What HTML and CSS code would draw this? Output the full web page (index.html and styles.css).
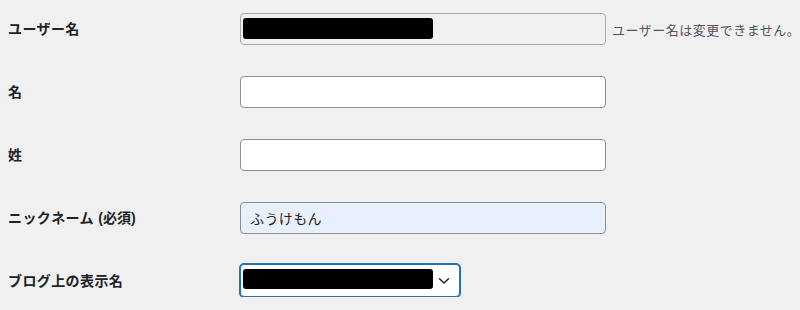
FILE: index.html
```html
<!DOCTYPE html>
<html lang="ja">
<head>
    <meta charset="UTF-8">
    <meta name="viewport" content="width=device-width, initial-scale=1.0">
    <title>プロフィール</title>
    <link rel="stylesheet" href="styles.css">
</head>
<body>
    <div class="form-table">
        <div class="row">
            <label class="row-label" for="user_login">ユーザー名</label>
            <div class="field">
                <div class="masked">
                    <input type="text" id="user_login" class="regular-text" value="" disabled>
                    <span class="blackout"></span>
                </div>
                <span class="description">ユーザー名は変更できません。</span>
            </div>
        </div>

        <div class="row">
            <label class="row-label" for="first_name">名</label>
            <div class="field">
                <input type="text" id="first_name" class="regular-text" value="">
            </div>
        </div>

        <div class="row">
            <label class="row-label" for="last_name">姓</label>
            <div class="field">
                <input type="text" id="last_name" class="regular-text" value="">
            </div>
        </div>

        <div class="row">
            <label class="row-label" for="nickname">ニックネーム <span class="req">(必須)</span></label>
            <div class="field">
                <input type="text" id="nickname" class="regular-text autofilled" value="ふうけもん">
            </div>
        </div>

        <div class="row">
            <label class="row-label" for="display_name">ブログ上の表示名</label>
            <div class="field">
                <div class="masked select-wrap">
                    <select id="display_name" class="display-select">
                        <option></option>
                    </select>
                    <span class="blackout"></span>
                    <svg class="chevron" width="12" height="8" viewBox="0 0 12 8">
                        <path d="M1.5 1.8 L6 6 L10.5 1.8" fill="none" stroke="#1d2327" stroke-width="1.5" stroke-linecap="round" stroke-linejoin="round"/>
                    </svg>
                </div>
            </div>
        </div>
    </div>
</body>
</html>
```

FILE: styles.css
```css
* {
    margin: 0;
    padding: 0;
    box-sizing: border-box;
}

body {
    background: #f0f0f1;
    color: #1d2327;
    font-family: "Liberation Sans", "Noto Sans CJK JP", sans-serif;
    font-size: 14px;
    padding: 13px 0 0 8px;
}

.form-table {
    display: flex;
    flex-direction: column;
    gap: 31px;
}

.row {
    display: flex;
    align-items: center;
    height: 32px;
}

.row-label {
    width: 232px;
    flex-shrink: 0;
    font-weight: 700;
    font-size: 14px;
    line-height: 20px;
    letter-spacing: 0.4px;
}

.req {
    letter-spacing: 0;
}

.field {
    display: flex;
    align-items: center;
    gap: 6px;
    height: 100%;
}

.regular-text {
    width: 366px;
    height: 32px;
    padding: 0 9px;
    font-family: "Noto Sans CJK JP", sans-serif;
    font-size: 14px;
    letter-spacing: 0.4px;
    color: #1d2327;
    background: #fff;
    border: 1px solid #8c8f94;
    border-radius: 4px;
    outline: none;
}

.regular-text:disabled {
    background: #f0f0f1;
    border-color: #a7aaad;
}

.autofilled {
    background: #e8f0fe;
}

.masked {
    position: relative;
    height: 32px;
}

.blackout {
    position: absolute;
    left: 3px;
    top: 5px;
    width: 190px;
    height: 21px;
    background: #000;
    border-radius: 3px;
    filter: blur(0.6px);
}

.description {
    font-family: "Noto Sans CJK JP", sans-serif;
    font-size: 13px;
    letter-spacing: 0.5px;
    color: #50575e;
    white-space: nowrap;
}

.select-wrap {
    height: 33px;
    margin-top: -1px;
}

.display-select {
    appearance: none;
    -webkit-appearance: none;
    width: 220px;
    height: 33px;
    background: #fff;
    border: 1px solid #2271b1;
    box-shadow: 0 0 0 1px #2271b1;
    border-radius: 4px;
    outline: none;
}

.select-wrap .blackout {
    top: 5px;
    height: 20px;
}

.chevron {
    position: absolute;
    left: 198px;
    top: 13px;
}
```
